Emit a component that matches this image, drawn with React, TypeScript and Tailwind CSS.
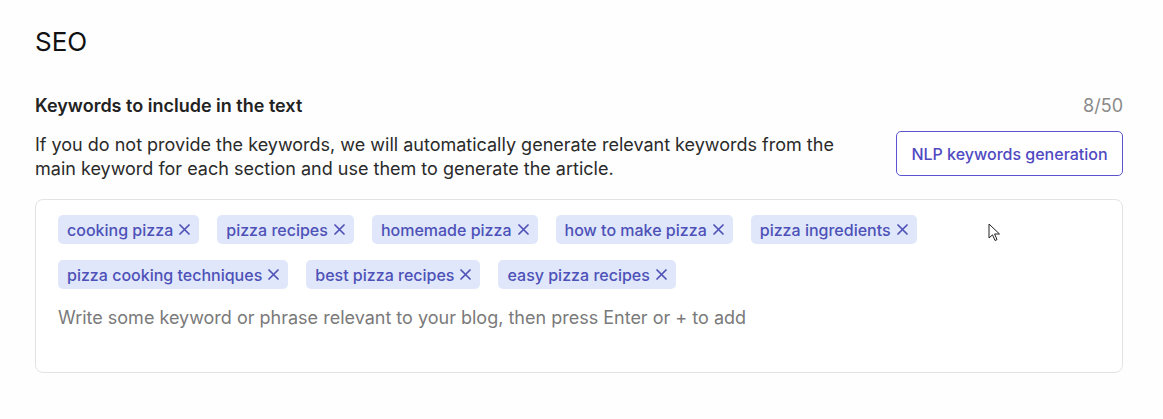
import React from "react";

const tags1 = ["cooking pizza", "pizza recipes", "homemade pizza", "how to make pizza", "pizza ingredients"];
const tags2 = ["pizza cooking techniques", "best pizza recipes", "easy pizza recipes"];

function Tag({ label }: { label: string }) {
  return (
    <span className="flex h-[29px] items-center gap-[6px] rounded-[5px] bg-[#e0e7fa] pl-[9px] pr-[9px] text-[16px] font-medium text-[#4d51b8]">
      <span>{label}</span>
      <svg width="11" height="11" viewBox="0 0 11 11" fill="none" stroke="#4d51b8" strokeWidth="1.7" strokeLinecap="round">
        <path d="M1 1L10 10M10 1L1 10" />
      </svg>
    </span>
  );
}

export default function App() {
  return (
    <div className="relative min-h-[419px] w-[1163px] bg-[#fefefe] pl-[35px] pr-[40px] pt-[26px] text-[#1d1d1f]" style={{ fontFamily: "Inter, 'Noto Sans', sans-serif" }}>
      <h1 className="text-[26px] leading-[32px] font-normal text-[#111]">SEO</h1>
      <div className="mt-[36px] flex items-center justify-between leading-[24px]">
        <span className="text-[18px] font-semibold text-[#222]">Keywords to include in the text</span>
        <span className="text-[18px] text-[#8a8a8a]">8/50</span>
      </div>
      <div className="mt-[13px] flex items-start justify-between">
        <p className="mt-[2px] w-[820px] text-[18px] leading-[24px] text-[#2a2a2a]">
          If you do not provide the keywords, we will automatically generate relevant keywords from the main keyword for each section and use them to generate the article.
        </p>
        <button className="flex h-[45px] w-[227px] items-center justify-center rounded-[5px] border border-[#5b54cc] bg-white text-[16px] font-medium text-[#4f49c2]">
          NLP keywords generation
        </button>
      </div>
      <div className="mt-[18px] min-h-[174px] rounded-[8px] border border-[#e3e3e3] bg-white pl-[22px] pt-[15px]">
        <div className="flex gap-[18px]">
          {tags1.map((t) => (
            <Tag key={t} label={t} />
          ))}
        </div>
        <div className="mt-[16px] flex gap-[18px]">
          {tags2.map((t) => (
            <Tag key={t} label={t} />
          ))}
        </div>
        <div className="mt-[17px] text-[18px] leading-[24px] text-[#7a7a7a]">
          Write some keyword or phrase relevant to your blog, then press Enter or + to add
        </div>
      </div>
      <svg className="absolute left-[988px] top-[223px]" width="13" height="19" viewBox="0 0 13 19">
        <path d="M1 1 L1 15 L4.5 11.8 L7 17.5 L9 16.6 L6.6 11 L11.5 11 Z" fill="#fff" stroke="#222" strokeWidth="1" strokeLinejoin="round" />
      </svg>
    </div>
  );
}
